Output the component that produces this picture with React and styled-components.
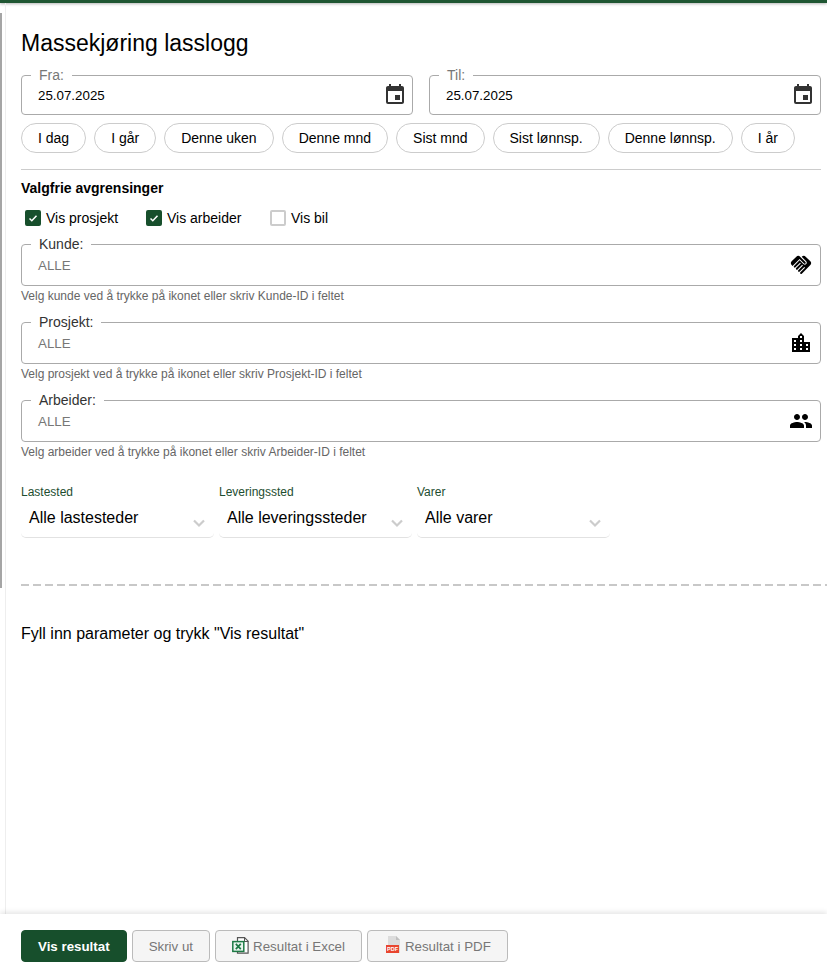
import React from "react";
import styled, { createGlobalStyle } from "styled-components";
import { MdHandshake, MdLocationCity, MdPeople, MdEvent } from "react-icons/md";

const GlobalStyle = createGlobalStyle`
  html, body {
    margin: 0;
    padding: 0;
    height: 100%;
    overflow: hidden;
    background: #fff;
    font-family: "Liberation Sans", Arial, sans-serif;
    color: #000;
  }
`;

const GREEN = "#174f2c";

const Page = styled.div`
  width: 827px;
  height: 968px;
  display: flex;
  flex-direction: column;
  overflow: hidden;
`;

const TopBar = styled.div`
  flex: none;
  height: 3px;
  background: #1f5632;
  box-shadow: 0 1px 3px rgba(0, 0, 0, 0.3);
`;

const Body = styled.div`
  flex: 1;
  display: flex;
  min-height: 0;
`;

const Rail = styled.div`
  flex: none;
  width: 6px;
  border-right: 1px solid #eee;
  box-sizing: border-box;
  display: flex;
  padding-top: 10px;
`;

const RailLine = styled.div`
  width: 2px;
  height: 575px;
  background: #a5a5a5;
`;

const Main = styled.main`
  flex: 1;
  min-width: 0;
  padding: 26px 0 0 15px;
`;

const Title = styled.h1`
  margin: 0;
  font-size: 23px;
  line-height: 28px;
  font-weight: 400;
`;

const DateRow = styled.div`
  display: flex;
  gap: 16px;
  margin-top: 18px;
  padding-right: 6px;
`;

const Box = styled.div`
  position: relative;
  flex: 1;
  box-sizing: border-box;
  height: ${(p) => p.$height}px;
  padding: 0 ${(p) => p.$right}px 0 16px;
  border: 1px solid #aaa;
  border-radius: 4px;
  display: flex;
  align-items: center;
  justify-content: space-between;
`;

const Legend = styled.span`
  position: absolute;
  top: -8px;
  left: 9px;
  padding: 0 8px;
  background: #fff;
  font-size: 14px;
  line-height: 14px;
  color: ${(p) => p.$color};
`;

const Value = styled.span`
  font-size: 13.33px;
  color: ${(p) => p.$color};
`;

const Chips = styled.div`
  display: flex;
  gap: 8px;
  margin-top: 8px;
`;

const Chip = styled.button`
  height: 30px;
  padding: 0 16px;
  background: #fff;
  border: 1px solid #ccc;
  border-radius: 15px;
  font: 14px "Liberation Sans", Arial, sans-serif;
  color: #000;
`;

const Divider = styled.hr`
  margin: 16px 6px 0 0;
  border: 0;
  border-top: 1px solid #ccc;
`;

const SectionTitle = styled.h2`
  margin: 10px 0 0;
  font-size: 14px;
  line-height: 16px;
  font-weight: 700;
`;

const Checks = styled.div`
  display: flex;
  margin: 13px 0 0 4px;
  height: 18px;
  align-items: center;
`;

const Check = styled.label`
  display: flex;
  align-items: center;
  gap: 5px;
  font-size: 14px;
  width: ${(p) => p.$width}px;
`;

const CheckBox = styled.span`
  width: 16px;
  height: 16px;
  box-sizing: border-box;
  border-radius: 2px;
  display: flex;
  align-items: center;
  justify-content: center;
  background: ${(p) => (p.$on ? GREEN : "#fff")};
  border: 2px solid ${(p) => (p.$on ? GREEN : "#ccc")};
`;

const FilterGroup = styled.div`
  margin-top: ${(p) => p.$top}px;
  padding-right: 6px;
`;

const Hint = styled.div`
  margin-top: 3px;
  font-size: 12px;
  line-height: 14px;
  color: #666;
`;

const Selects = styled.div`
  display: flex;
  gap: 5px;
  margin-top: 26px;
`;

const SelectWrap = styled.div`
  width: 193px;
`;

const SelectLabel = styled.div`
  font-size: 12px;
  line-height: 14px;
  color: #1d4d30;
`;

const Select = styled.div`
  box-sizing: border-box;
  height: 39px;
  padding: 7px 8px 0;
  display: flex;
  justify-content: space-between;
  border-bottom: 1px solid #e2e2e2;
  border-radius: 0 0 5px 5px;
  font-size: 16px;
  line-height: 24px;
`;

const Chevron = styled.svg`
  margin-top: 10px;
`;

const Dashed = styled.div`
  margin-top: 46px;
  height: 2px;
  background-image: repeating-linear-gradient(to right, #c8c8c8 0 8px, transparent 8px 12px);
`;

const Message = styled.p`
  margin: 39px 0 0;
  font-size: 16px;
  line-height: 18px;
`;

const Footer = styled.footer`
  flex: none;
  height: 54px;
  box-sizing: border-box;
  padding: 16px 0 0 21px;
  display: flex;
  gap: 5px;
  background: #fff;
  box-shadow: 0 -2px 5px rgba(0, 0, 0, 0.1);
  position: relative;
`;

const Button = styled.button`
  height: 32px;
  box-sizing: border-box;
  padding: 0 16px;
  display: flex;
  align-items: center;
  gap: 3px;
  font: ${(p) => (p.$primary ? 700 : 400)} 13.33px "Liberation Sans", Arial, sans-serif;
  color: ${(p) => (p.$primary ? "#fff" : "#777")};
  background: ${(p) => (p.$primary ? GREEN : "#f5f5f5")};
  border: 1px solid ${(p) => (p.$primary ? GREEN : "#bbb")};
  border-radius: 4px;
`;

const Tick = () => (
  <svg width="12" height="12" viewBox="0 0 12 12" fill="none" stroke="#fff" strokeWidth="1.5">
    <path d="M2.5 6.5l2.3 2.2 4.7-5" />
  </svg>
);

const ExcelIcon = () => (
  <svg width="18" height="18" viewBox="0 0 18 18">
    <path fill="#fff" stroke="#555" strokeWidth="1.2" d="M5.5 .6h7l3.600 3.600v12h-10.600z" />
    <path fill="#555" d="M12 .6h1v3.400h3.400v1H12z" />
    <rect x=".8" y="4.600" width="11" height="9.800" fill="#e9f5ee" stroke="#1d7a45" strokeWidth="1.500" />
    <path stroke="#1d7a45" strokeWidth="1.700" d="M3.800 6.800l5 5.400M8.800 6.800l-5 5.400" />
  </svg>
);

const PdfLabel = styled.text`
  font: 700 5.5px "Liberation Sans", Arial, sans-serif;
  fill: #fff;
`;

const PdfIcon = () => (
  <svg width="18" height="20" viewBox="0 0 18 20">
    <path fill="#dcdcdc" d="M4 0h8l4 4v13H4z" />
    <path fill="#c0c0c0" d="M12 0l4 4h-4z" />
    <rect x="2" y="9" width="13" height="8" fill="#e8452f" />
    <PdfLabel x="3" y="15">PDF</PdfLabel>
  </svg>
);

const DateField = ({ label, value }) => (
  <Box $height={40} $right={5}>
    <Legend $color="#777">{label}</Legend>
    <Value $color="#000">{value}</Value>
    <MdEvent size={24} color="#333" />
  </Box>
);

const FilterField = ({ label, hint, Icon, top }) => (
  <FilterGroup $top={top}>
    <Box $height={42} $right={7}>
      <Legend $color="#333">{label}</Legend>
      <Value $color="#777">ALLE</Value>
      <Icon size={24} color="#000" />
    </Box>
    <Hint>{hint}</Hint>
  </FilterGroup>
);

const SelectField = ({ label, value }) => (
  <SelectWrap>
    <SelectLabel>{label}</SelectLabel>
    <Select>
      {value}
      <Chevron width="14" height="14" viewBox="0 0 14 14" fill="none" stroke="#ccc" strokeWidth="2.2">
        <path d="M2 4.500l5 5 5-5" />
      </Chevron>
    </Select>
  </SelectWrap>
);

const ranges = ["I dag", "I går", "Denne uken", "Denne mnd", "Sist mnd", "Sist lønnsp.", "Denne lønnsp.", "I år"];

export default function App() {
  return (
    <>
      <GlobalStyle />
      <Page>
        <TopBar />
        <Body>
          <Rail>
            <RailLine />
          </Rail>
          <Main>
            <Title>Massekjøring lasslogg</Title>
            <DateRow>
              <DateField label="Fra:" value="25.07.2025" />
              <DateField label="Til:" value="25.07.2025" />
            </DateRow>
            <Chips>
              {ranges.map((r) => (
                <Chip key={r}>{r}</Chip>
              ))}
            </Chips>
            <Divider />
            <SectionTitle>Valgfrie avgrensinger</SectionTitle>
            <Checks>
              <Check $width={121}>
                <CheckBox $on>
                  <Tick />
                </CheckBox>
                Vis prosjekt
              </Check>
              <Check $width={124}>
                <CheckBox $on>
                  <Tick />
                </CheckBox>
                Vis arbeider
              </Check>
              <Check>
                <CheckBox />
                Vis bil
              </Check>
            </Checks>
            <FilterField
              top={17}
              label="Kunde:"
              Icon={MdHandshake}
              hint="Velg kunde ved å trykke på ikonet eller skriv Kunde-ID i feltet"
            />
            <FilterField
              top={19}
              label="Prosjekt:"
              Icon={MdLocationCity}
              hint="Velg prosjekt ved å trykke på ikonet eller skriv Prosjekt-ID i feltet"
            />
            <FilterField
              top={19}
              label="Arbeider:"
              Icon={MdPeople}
              hint="Velg arbeider ved å trykke på ikonet eller skriv Arbeider-ID i feltet"
            />
            <Selects>
              <SelectField label="Lastested" value="Alle lastesteder" />
              <SelectField label="Leveringssted" value="Alle leveringssteder" />
              <SelectField label="Varer" value="Alle varer" />
            </Selects>
            <Dashed />
            <Message>Fyll inn parameter og trykk "Vis resultat"</Message>
          </Main>
        </Body>
        <Footer>
          <Button $primary>Vis resultat</Button>
          <Button>Skriv ut</Button>
          <Button>
            <ExcelIcon />
            Resultat i Excel
          </Button>
          <Button>
            <PdfIcon />
            Resultat i PDF
          </Button>
        </Footer>
      </Page>
    </>
  );
}
